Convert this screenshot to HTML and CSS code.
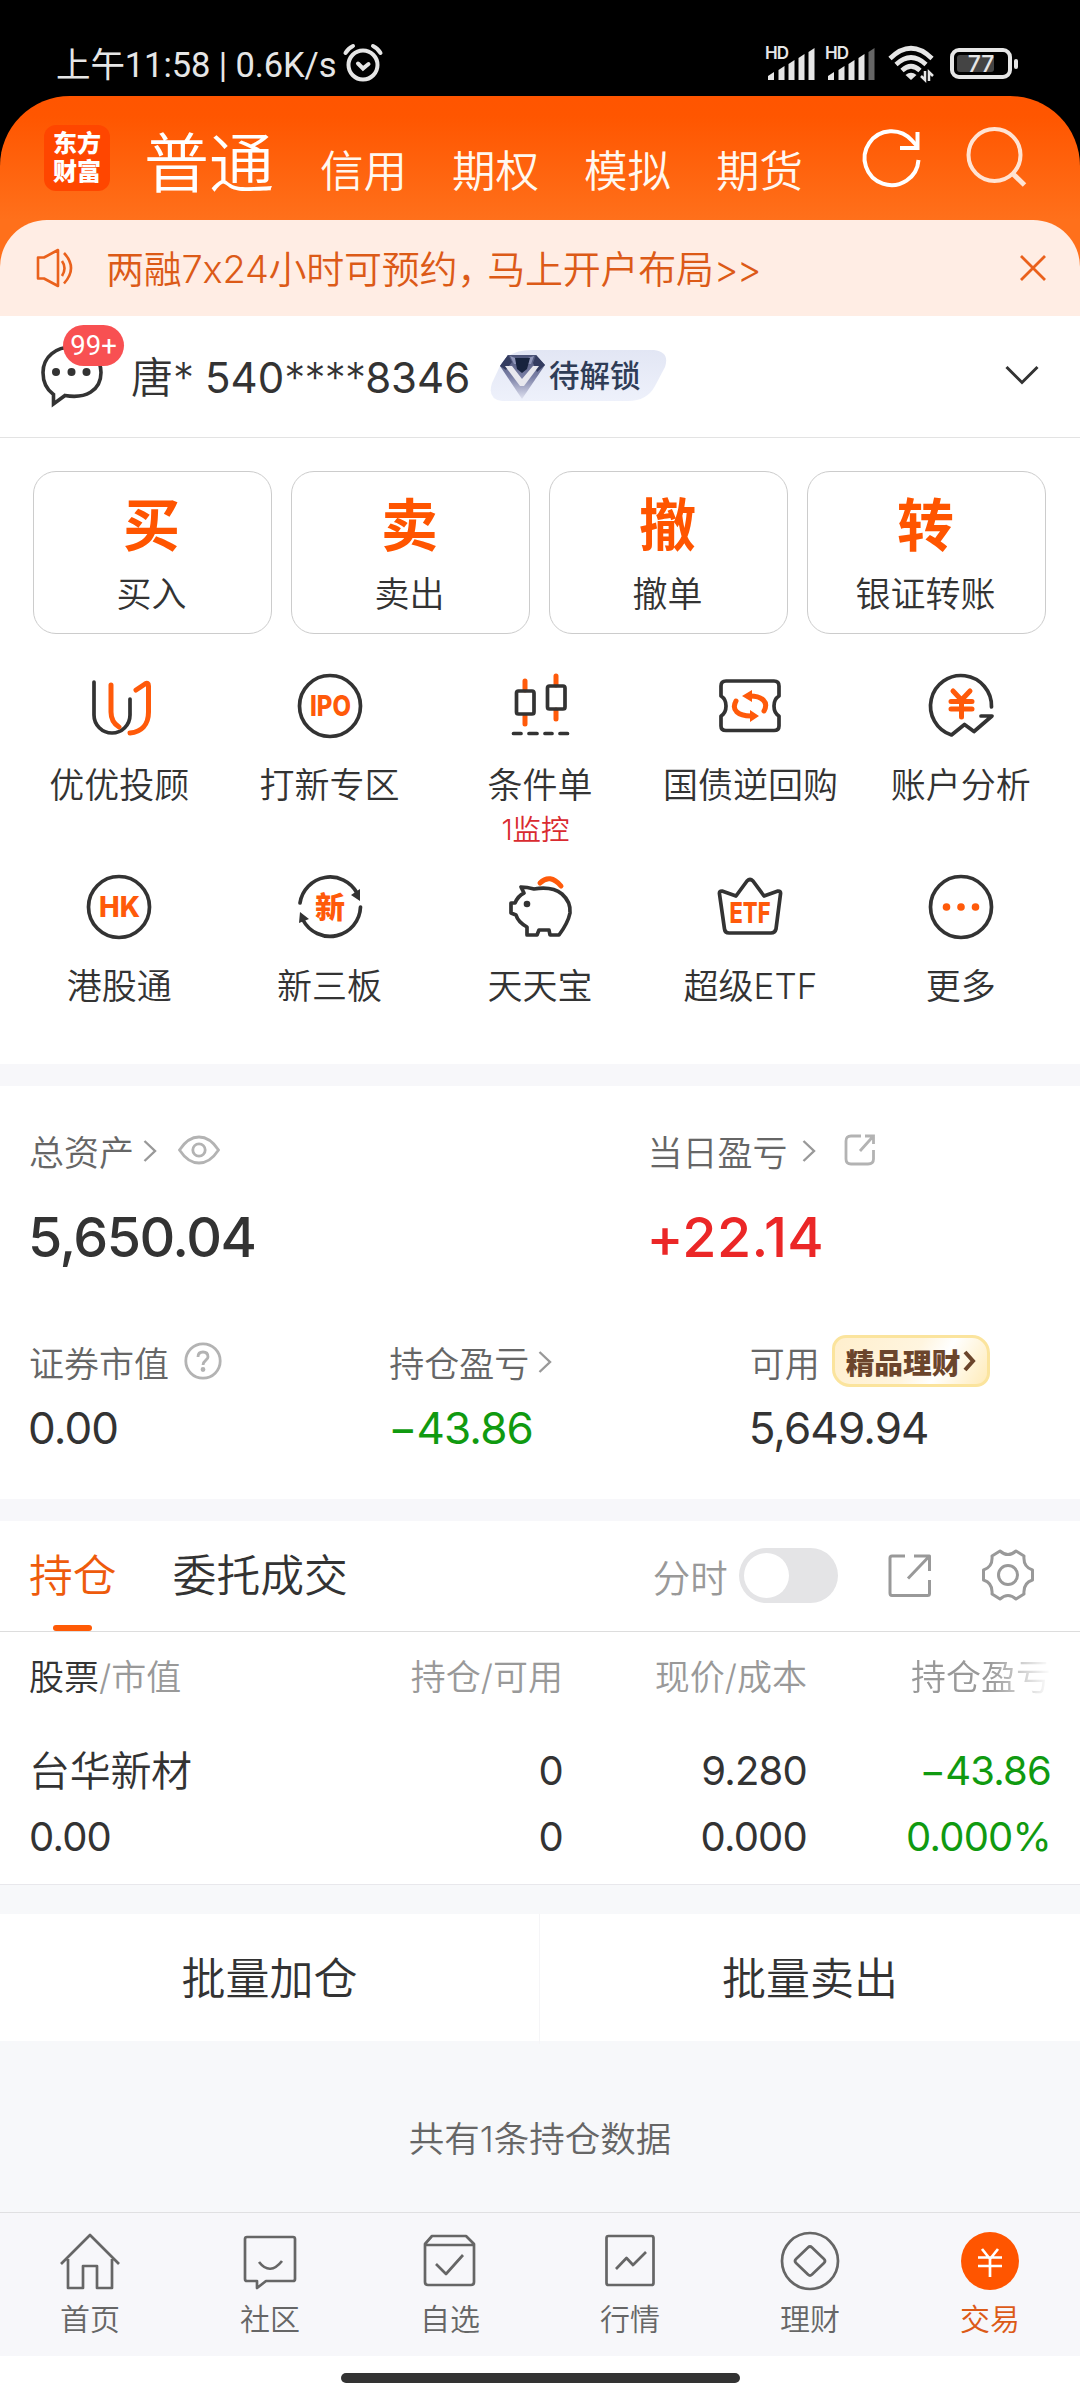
FILE: index.html
```html
<!DOCTYPE html>
<html lang="zh-CN">
<head>
<meta charset="utf-8">
<title>交易</title>
<link rel="stylesheet" href="styles.css">
</head>
<body>
<div class="statusbar">
  <span class="clock">上午11:58 | 0.6K/s</span>
  <svg class="alarm" width="42" height="40" viewBox="0 0 42 40" fill="none" stroke="#e6e6e6" stroke-width="4" stroke-linecap="round"><circle cx="21" cy="22" r="14.5"/><path d="M3.5 10Q6 5.500 11 3M31 3Q36 5.500 38.500 10M16 20.500L21 25.500L26.500 21"/></svg>
  <div class="status-icons">
    <svg width="52" height="36" viewBox="0 0 52 36" fill="#e6e6e6"><text x="0" y="13" font-size="17" font-weight="600" textLength="24">HD</text><path d="M3 34V30L9 26V34ZM13.500 34V24L19.500 20V34ZM23.500 34V18L29.500 14V34ZM33.500 34V12L39.500 8V34ZM43.500 34V6L49.500 2V34Z"/></svg>
    <svg width="52" height="36" viewBox="0 0 52 36" fill="#e6e6e6"><text x="0" y="13" font-size="17" font-weight="600" textLength="24">HD</text><path d="M3 34V30L9 26V34ZM13.500 34V24L19.500 20V34ZM23.500 34V18L29.500 14V34ZM33.500 34V12L39.500 8V34Z"/><path fill="#666" d="M43.500 34V6L49.500 2V34Z"/></svg>
    <svg class="wifi" width="48" height="38" viewBox="0 0 48 38" fill="none" stroke="#e6e6e6" stroke-width="4.600"><path d="M2 13.500Q23 -7 44 13.500M8 19.500Q23 5.500 38 19.500M14 25.500Q23 17 32 25.500"/><path d="M23 35L17.500 30Q23 25.500 28.500 30Z" fill="#e6e6e6" stroke="none"/><path d="M37 26V35L33 31M41 36V27L45 31" stroke-width="2.500"/></svg>
    <svg class="battery" width="70" height="32" viewBox="0 0 70 32"><rect x="2" y="2" width="58" height="27" rx="7" fill="none" stroke="#e6e6e6" stroke-width="4"/><rect x="7" y="7" width="37" height="17" rx="3" fill="#444"/><rect x="64" y="11" width="4" height="10" rx="2" fill="#e6e6e6"/><text x="31" y="24" font-size="23" font-weight="500" fill="#e6e6e6" text-anchor="middle">77</text></svg>
  </div>
</div>

<div class="shell">
  <header class="topbar">
    <div class="logo"><span>东方</span><span>财富</span></div>
    <nav class="accounts">
      <span class="current">普通</span><span>信用</span><span>期权</span><span>模拟</span><span>期货</span>
    </nav>
    <svg class="refresh" width="62" height="64" viewBox="0 0 62 64" fill="none" stroke="#fff" stroke-width="4"><path d="M57.500 34A27 27 0 1 1 51 14.500L56 20"/><path d="M56.500 6V22H39"/></svg>
    <svg class="search" width="62" height="64" viewBox="0 0 62 64" fill="none" stroke="#ffe3d3" stroke-width="4"><circle cx="28.500" cy="29" r="26"/><path d="M46 47L58.500 59" stroke-width="5"/></svg>
  </header>

  <div class="notice">
    <svg width="40" height="40" viewBox="0 0 40 40" fill="none" stroke="#ea611c" stroke-width="2.600"><path d="M2 9.500H8L22 2V38L8 30.500H2Z" stroke-linejoin="round"/><path d="M26 13Q31 20 26 28M28 5Q42 20 28 35.500"/></svg>
    <span class="notice-text">两融7x24小时可预约<i>，</i>马上开户布局<i class="more">&gt;&gt;</i></span>
    <svg width="26" height="26" viewBox="0 0 26 26" fill="none" stroke="#ea611c" stroke-width="2.800"><path d="M1 1L25 25M25 1L1 25"/></svg>
  </div>

  <div class="customer">
    <div class="msg">
      <svg width="64" height="76" viewBox="0 0 64 76" fill="none" stroke="#333" stroke-width="3.600"><path d="M13.500 69V59.500Q3 52 3 37.500C3 21 17 12 31.500 12S61 21 61 37.500C61 56 45 64 25 60.500Z" stroke-linejoin="miter"/><g fill="#333" stroke="none"><circle cx="16" cy="37" r="4"/><circle cx="31.500" cy="37" r="4"/><circle cx="46.500" cy="37" r="4"/></g></svg>
      <span class="badge">99+</span>
    </div>
    <span class="cust-name">唐<i>*</i> <b>540</b><i>****</i><b>8346</b></span>
    <div class="unlock">
      <svg class="unlock-bg" width="178" height="51" viewBox="0 0 178 51"><defs><linearGradient id="lv" x1="0" y1="0" x2="0" y2="1"><stop offset="0" stop-color="#e2e6f4"/><stop offset="1" stop-color="#eef1fb"/></linearGradient><linearGradient id="gem" x1="0" y1="0" x2="0" y2="1"><stop offset="0" stop-color="#4c5478"/><stop offset=".5" stop-color="#7b80a6"/><stop offset="1" stop-color="#dfe1f0"/></linearGradient></defs><path d="M42 0H164Q180 2 175 17L165 36Q157 51 138 51H12Q-3 49 2 33L10 16Q18 0 42 0Z" fill="url(#lv)"/><path d="M18 5H46L55 15L32 49L10 16Z" fill="url(#gem)"/><path d="M10 16L18 5L22 12L16 20ZM46 5L55 15L47 22L43 13Z" fill="#343c60"/><path d="M20 6L28 9H35L44 6L41 14H24Z" fill="#8f95b8"/><path d="M25 8H40L37 19L32 23L27 19Z" fill="#17233e"/><path d="M15 16H22L32 29L43 16H49L34 36H30Z" fill="#e8e8ee"/></svg>
      <span>待解锁</span>
    </div>
    <svg class="expand" width="34" height="20" viewBox="0 0 34 20" fill="none" stroke="#333" stroke-width="3"><path d="M1.500 2L17 17.500L32.500 2"/></svg>
  </div>

  <section class="actions">
    <div class="action"><b>买</b><span>买入</span></div>
    <div class="action"><b>卖</b><span>卖出</span></div>
    <div class="action"><b>撤</b><span>撤单</span></div>
    <div class="action"><b>转</b><span>银证转账</span></div>
  </section>

  <section class="features">
    <div class="feature"><svg viewBox="0 0 72 72"><path d="M11 12V45A18 18 0 0 0 47 45V29"/><path class="o" d="M28 15V42Q28 52 36 57M53 20L62 14Q65.500 12 65.500 16V42C65.500 55 58 62 47 63"/></svg><span>优优投顾</span></div>
    <div class="feature"><svg viewBox="0 0 72 72"><circle cx="36" cy="36" r="30.500"/><text x="16" y="46" font-size="28" textLength="41" lengthAdjust="spacingAndGlyphs">IPO</text></svg><span>打新专区</span></div>
    <div class="feature"><svg viewBox="0 0 72 72"><path class="o" d="M21 11V20M21 46V54M52 6V15M52 40V49"/><rect x="12.500" y="21" width="17.500" height="23" rx="2"/><rect x="43.500" y="16" width="17.500" height="23" rx="2"/><path d="M9.500 63.500H17M25 63.500H33M41 63.500H48M56 63.500H63.500"/></svg><span>条件单</span><em>1监控</em></div>
    <div class="feature"><svg viewBox="0 0 72 72"><path d="M12 11H60Q65 11 65 16V26Q60 29 60 36T65 46V56Q65 60.500 60 60.500H12Q7 60.500 7 56V46Q12 43 12 36T7 26V16Q7 11 12 11Z"/><path class="o" d="M22 31C17 40 24 46 37 46M50 41C55 32 48 26 36 26"/><path class="of" d="M28 26L38 20V32ZM45 46L36 40V52Z"/></svg><span>国债逆回购</span></div>
    <div class="feature"><svg viewBox="0 0 72 72"><path d="M66.500 37A30.500 30.500 0 1 0 26.500 65L39.500 54.500L49 61.500L67 46H56"/><path class="o" d="M28 21L36.500 30L45 21M36.500 30V47M26 31.500H47M26 39H47" stroke-width="4.600"/></svg><span>账户分析</span></div>
    <div class="feature"><svg viewBox="0 0 72 72"><circle cx="36" cy="36" r="30.500"/><text x="16" y="46" font-size="28" textLength="41" lengthAdjust="spacingAndGlyphs">HK</text></svg><span>港股通</span></div>
    <div class="feature"><svg viewBox="0 0 72 72"><path d="M6 32A30.500 30.500 0 0 1 63 22M66.500 36A30.500 30.500 0 0 1 9 49"/><path class="df" d="M57 24L66 18V30ZM6 41L15 48L5 52Z"/><text class="cn" x="36" y="47" font-size="30" text-anchor="middle">新</text></svg><span>新三板</span></div>
    <div class="feature"><svg viewBox="0 0 72 72"><path class="o" d="M36 12Q46 2 57 15"/><path d="M17 16Q23 16 30 18Q48 15 58 23Q67 31 66 42Q64 52 55 64H46L45 59H35L33 64H23V56Q14 51 12 44L7 42V32H11Q14 25 20 22Z"/><circle class="df" cx="23" cy="33" r="3.300"/></svg><span>天天宝</span></div>
    <div class="feature"><svg viewBox="0 0 72 72"><path d="M8 20L22 25L33 10Q36 7 39 10L50 25L64 20Q67 20 66.500 23L62 58Q61 62 57 62H15Q11 62 10.500 58L5.500 23Q5 20 8 20Z"/><text x="15.500" y="52" font-size="29" textLength="41" lengthAdjust="spacingAndGlyphs">ETF</text></svg><span>超级ETF</span></div>
    <div class="feature"><svg viewBox="0 0 72 72"><circle cx="36" cy="36" r="30.500"/><g class="of"><circle cx="21.500" cy="36" r="3.800"/><circle cx="36" cy="36" r="3.800"/><circle cx="50.500" cy="36" r="3.800"/></g></svg><span>更多</span></div>
  </section>

  <section class="assets">
    <div class="cell wide">
      <div class="cap">总资产<svg class="gt" width="14" height="22" viewBox="0 0 14 22"><path d="M1.500 1L12 11L1.500 21"/></svg><svg class="eye" width="42" height="30" viewBox="0 0 42 30"><path d="M1.500 15Q10 2 21 2T40.500 15Q32 28 21 28T1.500 15Z"/><circle cx="21" cy="15" r="6.200"/></svg></div>
      <div class="big">5,650.04</div>
    </div>
    <div class="cell wide second">
      <div class="cap">当日盈亏<svg class="gt far" width="14" height="22" viewBox="0 0 14 22"><path d="M1.500 1L12 11L1.500 21"/></svg><svg class="share" width="32" height="32" viewBox="0 0 32 32"><path d="M17 2H7Q2 2 2 7V25Q2 30 7 30H24Q29.500 30 29.500 25V16M21 2H29.500V10M29 2.500L16 17"/></svg></div>
      <div class="big up">+22.14</div>
    </div>
    <div class="cell">
      <div class="cap">证券市值<svg class="help" width="38" height="38" viewBox="0 0 38 38"><circle cx="19" cy="19" r="17.200"/><path d="M14 15Q14 10 19 10T24 15C24 18 19 18.500 19 23"/><circle cx="19" cy="27.500" r="1" fill="#b3b3b3"/></svg></div>
      <div class="num">0.00</div>
    </div>
    <div class="cell">
      <div class="cap">持仓盈亏<svg class="gt" width="14" height="22" viewBox="0 0 14 22"><path d="M1.500 1L12 11L1.500 21"/></svg></div>
      <div class="num down">−43.86</div>
    </div>
    <div class="cell">
      <div class="cap">可用<span class="promo">精品理财<svg width="13" height="22" viewBox="0 0 13 22"><path d="M2 2L10 11L2 20"/></svg></span></div>
      <div class="num">5,649.94</div>
    </div>
  </section>

  <section class="positions">
    <div class="tabs">
      <span class="tab on">持仓</span><span class="tab">委托成交</span>
      <span class="chart-label">分时</span><span class="toggle"></span>
      <svg class="export" width="43" height="43" viewBox="0 0 43 43"><path d="M17 2H4Q2 2 2 4V39Q2 41.500 4 41.500H39.500Q41.500 41.500 41.500 39.500V26M26 2H41.500V17M41 2.500L20 24.500"/></svg>
      <svg class="gear" width="52" height="52" viewBox="0 0 52 52"><circle cx="26" cy="26" r="9.500"/><path d="M18 2Q26 9 34 2L42 7Q41 18 50.500 21V31Q41 34 42 45L34 50Q26 43 18 50L10 45Q11 34 1.500 31V21Q11 18 10 7Z"/></svg>
    </div>
    <div class="grid head"><span><b>股票</b>/市值</span><span>持仓/可用</span><span>现价/成本</span><span class="fade">持仓盈亏</span></div>
    <div class="grid row"><span class="stock">台华新材</span><span>0</span><span>9.280</span><span class="down">−43.86</span><span>0.00</span><span>0</span><span>0.000</span><span class="down">0.000%</span></div>
  </section>

  <div class="batch"><span>批量加仓</span><span>批量卖出</span></div>
  <div class="total">共有1条持仓数据</div>

  <nav class="bottom">
    <div><svg viewBox="0 0 64 64"><path d="M3 35L32 6L61 35M10 30V59H25V37H39V59H54V30"/></svg><span>首页</span></div>
    <div><svg viewBox="0 0 64 64"><path d="M9 8H55Q57 8 57 10V50Q57 52 55 52H28L19 59V52H9Q7 52 7 50V10Q7 8 9 8Z"/><path d="M21 33Q32 47 44 32"/></svg><span>社区</span></div>
    <div><svg viewBox="0 0 64 64"><path d="M7 15L14 7H48L56 15V53Q56 56 53 56H10Q7 56 7 53ZM7 16H56M18 35L28 45L45 26"/></svg><span>自选</span></div>
    <div><svg viewBox="0 0 64 64"><rect x="8.500" y="7" width="47" height="49" rx="2"/><path d="M18 40L28.500 29L35 36L48 23"/></svg><span>行情</span></div>
    <div><svg viewBox="0 0 64 64"><circle cx="32" cy="32" r="28"/><path d="M30 18.500Q32 16.500 34 18.500L46 30Q48 32 46 34L34 45.500Q32 47.500 30 45.500L18 34Q16 32 18 30Z"/></svg><span>理财</span></div>
    <div class="on"><svg viewBox="0 0 64 64"><circle cx="32" cy="32" r="29" fill="#f50" stroke="none"/><path d="M24 20L32 30L40 20M32 30V48M20 28.500H44M20 37H44" stroke="#fff"/></svg><span>交易</span></div>
  </nav>
  <div class="gesture"><i></i></div>
</div>
</body>
</html>
```
FILE: styles.css
```css
* { box-sizing: border-box; }
body { margin: 0; width: 1080px; height: 2400px; overflow: hidden; background: #000; color: #333; font-family: Inter, "Noto Sans CJK SC", sans-serif; font-weight: 350; }
svg { display: block; flex: none; overflow: visible; }
i, em { font-style: normal; }
span { white-space: nowrap; }

.statusbar { height: 96px; padding: 32px 60px 0 56px; display: flex; align-items: center; color: #e6e6e6; }
.clock { font-size: 34.500px; letter-spacing: -.1px; font-weight: 400; font-family: Roboto, "Noto Sans CJK SC", sans-serif; width: 285px; margin-top: -5px; }
.alarm { margin-left: 1px; margin-top: -2px; }
.status-icons { margin-left: auto; margin-top: -1px; display: flex; align-items: center; gap: 8px; }
.wifi { margin-left: 3px; }
.battery { margin-left: 6px; }

.shell { border-radius: 70px 70px 0 0; overflow: hidden; background: linear-gradient(#f50 0, #ff5600 20px, #ff701b 124px, #ff701b 180px, #fff 180px); height: 2304px; }
.topbar { height: 124px; display: flex; padding: 0 52px 0 44px; }
.logo { width: 66px; height: 66px; margin-top: 29px; border-radius: 12px; background: #ff4600; color: #fff; font-size: 24px; font-weight: 900; line-height: 28px; display: flex; flex-direction: column; align-items: center; padding-top: 5px; }
.accounts { display: flex; align-items: baseline; margin-left: 34px; color: #fff8f0; font-size: 43.500px; line-height: 135px; height: 124px; }
.accounts span { width: 132px; flex: none; }
.accounts .current { font-size: 65px; width: 176px; color: #fff; }
.refresh { margin: 30px 0 0 13px; }
.search { margin: 30px 0 0 43px; }

.notice { height: 96px; border-radius: 47px 47px 0 0; background: #ffede4; color: #dc5a17; display: flex; align-items: center; padding: 0 34px 0 36px; }
.notice-text { margin-left: 30px; margin-top: -4px; font-size: 38px; letter-spacing: -.25px; flex: 1; }
.notice-text i { letter-spacing: -8px; }
.notice-text .more { letter-spacing: -2px; }

.customer { height: 122px; border-bottom: 1px solid #e3e3e3; background: #fff; display: flex; align-items: center; padding: 0 41px 0 40px; }
.msg { position: relative; width: 64px; height: 76px; margin-top: -7px; align-self: center; }
.badge { position: absolute; left: 23px; top: -10px; width: 61px; height: 41px; border-radius: 21px; background: #f85052; color: #fff; font: 400 27.500px/41px Roboto, sans-serif; text-align: center; }
.cust-name { margin-left: 27px; margin-top: -4px; width: 359px; font-size: 42px; }
.cust-name b { font-weight: 400; }
.cust-name i { font-weight: 300; letter-spacing: -.8px; }
.unlock { position: relative; width: 178px; height: 51px; margin-top: -2px; color: #2f3c56; font-size: 30.500px; font-weight: 500; line-height: 51px; padding-left: 59px; }
.unlock-bg { position: absolute; left: 0; top: 0; }
.unlock span { position: relative; }
.expand { margin-left: auto; margin-top: -3px; }

.actions { background: #fff; height: 208px; padding: 33px 34px 12px 33px; display: grid; grid-template-columns: repeat(4, 1fr); gap: 19px; }
.action { border: 1px solid #ccc; border-radius: 23px; display: flex; flex-direction: column; align-items: center; padding-right: 2px; }
.action b { font-size: 57px; line-height: 64px; margin-top: 22px; color: #f50; font-weight: 700; }
.action span { font-size: 35px; line-height: 44px; margin-top: 14px; }

.features { background: #fff; height: 418px; padding: 24px 14px 0; display: grid; grid-template-columns: repeat(5, 1fr); grid-template-rows: 201px 193px; }
.feature { display: flex; flex-direction: column; align-items: center; font-size: 35px; line-height: 44px; }
.feature > svg { width: 72px; height: 72px; fill: none; stroke: #333; stroke-width: 3.700; stroke-linecap: round; stroke-linejoin: round; }
.feature > span { margin-top: 21px; }
.feature svg .o { stroke: #ff5a0a; stroke-width: 5; }
.feature svg .of { fill: #ff5a0a; stroke: none; }
.feature svg .df { fill: #333; stroke: none; }
.feature svg text { fill: #ff5a0a; stroke: none; font-weight: 800; }
.feature em { color: #d92b30; font-size: 28.500px; line-height: 34px; margin: 6px 9px 0 0; }

.assets { background: #fff; border-top: 22px solid #f7f7fa; border-bottom: 22px solid #f7f7fa; height: 457px; padding: 42px 0 0 29px; display: grid; grid-template-columns: repeat(18, 1fr); grid-template-rows: 211px 1fr; margin-right: -30px; }
.cell { grid-column: span 6; }
.wide { grid-column: span 10; margin-right: 20px; }
.wide.second { grid-column: span 8; margin: 0 0 0 18px; }
.cap { height: 44px; font-size: 35px; color: #666; display: flex; align-items: center; }
.cap svg { fill: none; stroke: #b3b3b3; stroke-width: 2.800; }
.cap .gt { margin: 2px 0 0 9px; stroke: #999; stroke-width: 2.400; }
.cap .far { margin-left: 14px; }
.eye { margin-left: 21px; }
.share { margin-left: 28px; }
.help { margin-left: 15px; }
.big { font-size: 55.500px; line-height: 66px; margin: 32px 0 0 -1px; font-weight: 500; letter-spacing: -1.500px; }
.num { font-size: 44px; line-height: 54px; margin: 18px 0 0 -1px; font-weight: 400; letter-spacing: -.9px; }
.big.up { letter-spacing: .4px; }
.up { color: #eb2727; }
.down { color: #109a10; }
.promo { margin-left: 12px; width: 158px; height: 52px; border: 3px solid #fbe49d; border-radius: 14px 18px 14px 18px; background: linear-gradient(120deg, #ffefcd, #fff5df 50%, #fff 68%, #ffebb8); color: #6b452c; font-size: 28.700px; font-weight: 800; display: flex; align-items: center; padding-left: 11px; }
.cap .promo svg { stroke: #6b452c; stroke-width: 4; margin-left: 3px; }

.positions { background: #fff; height: 364px; border-bottom: 1px solid #e8e8ec; }
.tabs { height: 111px; border-bottom: 1px solid #ddd; display: flex; align-items: center; padding-left: 29px; }
.tab { position: relative; font-size: 43.800px; line-height: 110px; height: 110px; padding-top: 1px; margin-right: 56px; }
.tab.on { color: #ee5b0c; }
.tab.on::after { content: ""; position: absolute; left: 24px; bottom: 0; width: 39px; height: 6px; border-radius: 3px; background: #ff5a05; }
.chart-label { color: #999; font-size: 37.500px; margin-left: 249px; margin-top: -2px; }
.toggle { width: 99px; height: 55px; border-radius: 28px; background: #e4e4e6; margin-left: 11px; padding: 5px; margin-top: -2px; }
.toggle::after { content: ""; display: block; width: 45px; height: 45px; border-radius: 50%; background: #fff; }
.export, .gear { fill: none; stroke: #999; stroke-width: 3; stroke-linejoin: round; margin-top: -2px; }
.export { margin-left: 50px; }
.gear { margin-left: 51px; }
.grid { display: grid; grid-template-columns: 300px 234px 244px 244px; padding-left: 29px; text-align: right; }
.grid span:nth-child(4n+1) { text-align: left; }
.head { height: 89px; line-height: 90px; font-size: 35px; color: #999; }
.head b { color: #333; font-weight: 350; }
.fade { -webkit-mask-image: linear-gradient(90deg, #000 75%, transparent); mask-image: linear-gradient(90deg, #000 75%, transparent); }
.row { font-size: 40px; line-height: 66px; padding-top: 17px; font-weight: 400; letter-spacing: -.8px; }
.row .stock { font-size: 41px; font-weight: 350; letter-spacing: -.3px; }

.batch { height: 156px; border-top: 29px solid #f7f8fa; background: #fff; display: grid; grid-template-columns: 1fr 1fr; text-align: center; font-size: 44px; line-height: 130px; }
.batch span:first-child { border-right: 1px solid #f5f5f7; }
.total { height: 171px; background: #f7f8fa; text-align: center; color: #666; font-size: 35.500px; line-height: 197px; }
.bottom { height: 144px; background: #f7f7fa; border-top: 1px solid #e0e0e2; display: grid; grid-template-columns: repeat(6, 1fr); font-size: 30px; line-height: 40px; color: #666; padding-top: 16px; }
.bottom div { display: flex; flex-direction: column; align-items: center; }
.bottom svg { width: 64px; height: 64px; fill: none; stroke: #666; stroke-width: 2.700; stroke-linejoin: round; }
.bottom span { margin-top: 6px; }
.bottom .on { color: #dc5a17; }
.gesture { background: #fff; height: 45px; display: flex; justify-content: center; padding-top: 17px; }
.gesture i { width: 399px; height: 10px; border-radius: 5px; background: #333; }
```
